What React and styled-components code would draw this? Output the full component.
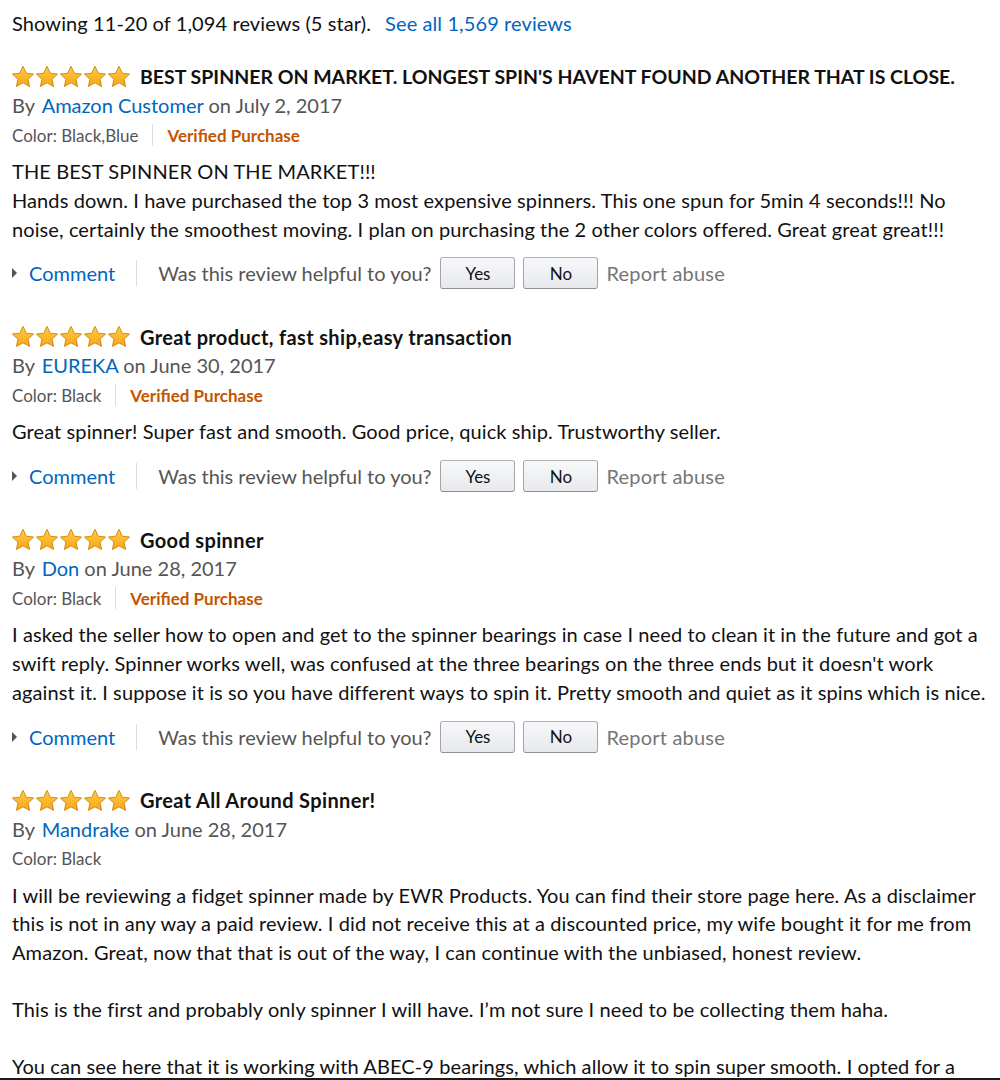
import React from "react";
import styled, { createGlobalStyle } from "styled-components";

const GlobalStyle = createGlobalStyle`
  html, body {
    margin: 0;
    padding: 0;
    background: #fff;
  }
  body {
    font-family: "Lato", "Noto Sans", sans-serif;
    color: #111;
  }
`;

const Page = styled.div`
  height: 1080px;
  overflow: hidden;
  padding: 9px 12px 0;
  box-sizing: border-box;
  position: relative;

  &::after {
    content: "";
    position: absolute;
    left: 0;
    right: 0;
    bottom: 0;
    height: 2px;
    background: #1a1a1a;
  }
`;

const Summary = styled.div`
  font-size: 20px;
  line-height: 29px;
  letter-spacing: 0.1px;
  color: #111;
`;

const Link = styled.a`
  color: #0066c0;
  text-decoration: none;
  margin-left: ${props => props.gap || 0}px;
  cursor: pointer;
`;

const Review = styled.div`
  margin-top: ${props => (props.first ? 24 : 33)}px;
`;

const TitleRow = styled.div`
  display: flex;
  align-items: center;
  height: 29px;
  gap: 9px;
`;

const Title = styled.span`
  font-size: ${props => (props.caps ? 19.5 : 20)}px;
  letter-spacing: ${props => (props.caps ? 0 : 0.35)}px;
  font-weight: 700;
  color: #111;
  white-space: nowrap;
`;

const Byline = styled.div`
  font-size: 20px;
  line-height: 29px;
  color: #555;
`;

const MetaRow = styled.div`
  display: flex;
  align-items: center;
  height: 30px;
  font-size: 17px;
  color: #555;
`;

const Divider = styled.span`
  width: 1px;
  height: 22px;
  background: #ddd;
  margin: 0 14px;
`;

const Verified = styled.span`
  color: #c45500;
  font-weight: 700;
`;

const Body = styled.div`
  margin-top: 7px;
  font-size: 20px;
  line-height: 28.8px;
  letter-spacing: 0.1px;
  color: #111;
`;

const Paragraph = styled.div`
  & + & {
    margin-top: 28px;
  }
`;

const Line = styled.div`
  white-space: nowrap;
`;

const Actions = styled.div`
  display: flex;
  align-items: center;
  height: 32px;
  margin-top: 14px;
  font-size: 20px;
`;

const Caret = styled.span`
  width: 0;
  height: 0;
  border-top: 5px solid transparent;
  border-bottom: 5px solid transparent;
  border-left: 5px solid #555;
  margin-right: 12px;
`;

const ActionDivider = styled.span`
  width: 1px;
  height: 26px;
  background: #ddd;
  margin: 0 21px;
`;

const Helpful = styled.span`
  color: #555;
  margin-right: 9px;
`;

const VoteButton = styled.button`
  width: 75px;
  height: 32px;
  margin-right: 8px;
  border: 1px solid #adb1b8;
  border-color: #adb1b8 #a2a6ac #8d9096;
  border-radius: 3px;
  background: linear-gradient(to bottom, #f7f8fa, #e7e9ec);
  font-family: inherit;
  font-size: 17px;
  color: #111;
  padding: 0;
  cursor: pointer;
`;

const Report = styled.span`
  color: #767676;
  letter-spacing: 0.2px;
`;

const Star = () => (
  <svg width="24" height="23" viewBox="0 0 24 23">
    <defs>
      <linearGradient id="starFill" x1="0" y1="0" x2="0" y2="1">
        <stop offset="0" stopColor="#ffce3d" />
        <stop offset="1" stopColor="#f7a41c" />
      </linearGradient>
    </defs>
    <path
      d="M12 1.3l3.2 6.9 7.4.8-5.5 5.1 1.5 7.4L12 17.8l-6.6 3.7 1.5-7.4-5.5-5.1 7.4-.8z"
      fill="url(#starFill)"
      stroke="#d88b12"
      strokeWidth="1"
      strokeLinejoin="round"
    />
  </svg>
);

const Stars = styled.span`
  display: flex;
  margin-left: -1px;
`;

const reviews = [
  {
    title: "BEST SPINNER ON MARKET. LONGEST SPIN'S HAVENT FOUND ANOTHER THAT IS CLOSE.",
    author: "Amazon Customer",
    date: "July 2, 2017",
    color: "Black,Blue",
    verified: true,
    body: [
      [
        "THE BEST SPINNER ON THE MARKET!!!",
        "Hands down. I have purchased the top 3 most expensive spinners. This one spun for 5min 4 seconds!!! No",
        "noise, certainly the smoothest moving. I plan on purchasing the 2 other colors offered. Great great great!!!"
      ]
    ]
  },
  {
    title: "Great product, fast ship,easy transaction",
    author: "EUREKA",
    date: "June 30, 2017",
    color: "Black",
    verified: true,
    body: [["Great spinner! Super fast and smooth. Good price, quick ship. Trustworthy seller."]]
  },
  {
    title: "Good spinner",
    author: "Don",
    date: "June 28, 2017",
    color: "Black",
    verified: true,
    body: [
      [
        "I asked the seller how to open and get to the spinner bearings in case I need to clean it in the future and got a",
        "swift reply. Spinner works well, was confused at the three bearings on the three ends but it doesn't work",
        "against it. I suppose it is so you have different ways to spin it. Pretty smooth and quiet as it spins which is nice."
      ]
    ]
  },
  {
    title: "Great All Around Spinner!",
    author: "Mandrake",
    date: "June 28, 2017",
    color: "Black",
    verified: false,
    noActions: true,
    body: [
      [
        "I will be reviewing a fidget spinner made by EWR Products. You can find their store page here. As a disclaimer",
        "this is not in any way a paid review. I did not receive this at a discounted price, my wife bought it for me from",
        "Amazon. Great, now that that is out of the way, I can continue with the unbiased, honest review."
      ],
      ["This is the first and probably only spinner I will have. I\u2019m not sure I need to be collecting them haha."],
      ["You can see here that it is working with ABEC-9 bearings, which allow it to spin super smooth. I opted for a"]
    ]
  }
];

const ReviewItem = ({ review, first }) => (
  <Review first={first}>
    <TitleRow>
      <Stars>
        {[0, 1, 2, 3, 4].map(i => (
          <Star key={i} />
        ))}
      </Stars>
      <Title caps={review.title === review.title.toUpperCase()}>{review.title}</Title>
    </TitleRow>
    <Byline>
      By <Link gap={2}>{review.author}</Link> on {review.date}
    </Byline>
    <MetaRow>
      <span>Color: {review.color}</span>
      {review.verified && (
        <>
          <Divider />
          <Verified>Verified Purchase</Verified>
        </>
      )}
    </MetaRow>
    <Body>
      {review.body.map((para, i) => (
        <Paragraph key={i}>
          {para.map((line, j) => (
            <Line key={j}>{line}</Line>
          ))}
        </Paragraph>
      ))}
    </Body>
    {!review.noActions && (
      <Actions>
        <Caret />
        <Link>Comment</Link>
        <ActionDivider />
        <Helpful>Was this review helpful to you?</Helpful>
        <VoteButton>Yes</VoteButton>
        <VoteButton>No</VoteButton>
        <Report>Report abuse</Report>
      </Actions>
    )}
  </Review>
);

const App = () => (
  <Page>
    <GlobalStyle />
    <Summary>
      Showing 11-20 of 1,094 reviews (5 star).
      <Link gap={14}>See all 1,569 reviews</Link>
    </Summary>
    {reviews.map((review, i) => (
      <ReviewItem key={i} review={review} first={i === 0} />
    ))}
  </Page>
);

export default App;
